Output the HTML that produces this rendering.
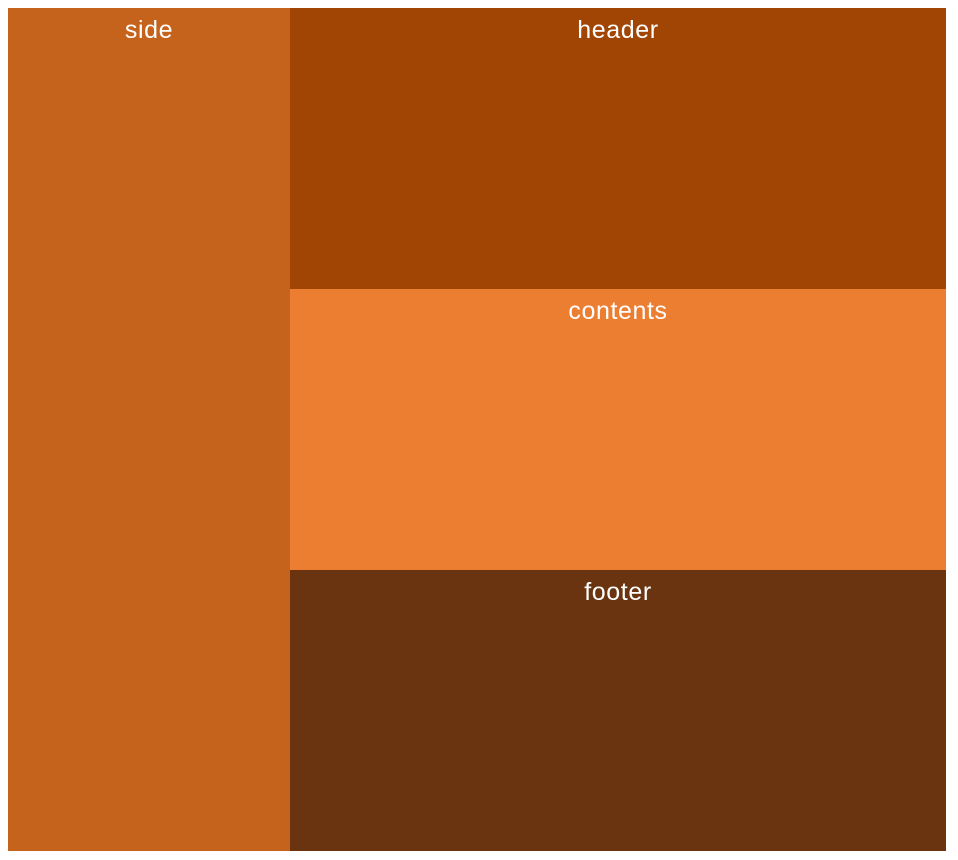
<!DOCTYPE html>
<html><head><style>
html,body{margin:0;padding:0;background:#fff;}
body{width:958px;height:860px;position:relative;font-family:"Liberation Sans",sans-serif;}
.b{position:absolute;color:#fff;text-align:center;font-size:25px;letter-spacing:0.6px;line-height:29px;padding-top:8px;box-sizing:border-box;}
</style></head><body>
<div class="b" style="left:8px;top:8px;width:282px;height:843px;background:#C5621C;">side</div>
<div class="b" style="left:290px;top:8px;width:656px;height:281px;background:#A04504;">header</div>
<div class="b" style="left:290px;top:289px;width:656px;height:281px;background:#EC7E32;">contents</div>
<div class="b" style="left:290px;top:570px;width:656px;height:281px;background:#6A3410;">footer</div>
</body></html>
